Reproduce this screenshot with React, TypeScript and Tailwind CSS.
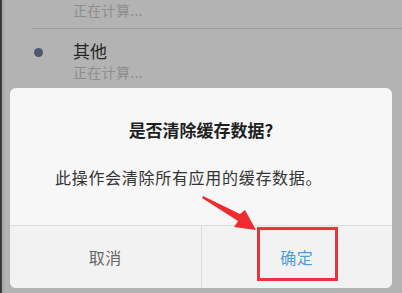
import React from "react";

export default function App() {
  const font = { fontFamily: '"Noto Sans CJK SC", "Noto Sans", sans-serif' };
  return (
    <div
      className="relative w-[402px] h-[293px] overflow-hidden bg-[#b3b3b3] flex"
      style={font}
    >
      <div className="w-[2px] h-full bg-[#3a3a3a]" />
      <div className="w-[3px] h-full bg-[#aaaaaa]" />
      <div className="flex-1 flex flex-col">
        <div className="h-[28px] pl-[68px] pt-[3px] flex items-start">
          <span className="text-[14px] leading-[15px] tracking-[0.3px] text-[#8e8e8e]">正在计算...</span>
        </div>
        <div className="ml-[27px] h-px bg-[#9e9e9e]" />
        <div className="flex pt-[10px]">
          <div className="w-[68px] flex justify-start pl-[29px] pt-[9px]">
            <div className="w-[9px] h-[9px] rounded-full bg-[#4d5870]" />
          </div>
          <div className="flex flex-col">
            <span className="text-[17px] leading-[24px] text-[#262626]">其他</span>
            <span className="text-[14px] leading-[20px] tracking-[0.3px] text-[#8e8e8e] mt-[-1px]">正在计算...</span>
          </div>
        </div>
      </div>

      {/* dialog */}
      <div className="absolute left-[10px] top-[88px] w-[382px] h-[200px] rounded-[6px] bg-[#f7f7f7] flex flex-col overflow-hidden">
        <div className="flex flex-col items-center pt-[30px]">
          <div className="text-[17px] leading-[24px] font-bold text-[#1f1f1f]">是否清除缓存数据?</div>
        </div>
        <div className="pl-[45px] mt-[23px] text-[16px] leading-[24px] tracking-[0.7px] text-[#333333]">
          此操作会清除所有应用的缓存数据。
        </div>
        <div className="mt-auto h-[63px] border-t border-[#dcdcdc] bg-[#f2f2f2] flex">
          <div className="flex-1 flex items-center justify-center text-[16px] tracking-[0.5px] text-[#666666]">取消</div>
          <div className="w-px bg-[#dcdcdc]" />
          <div className="flex-1 flex items-center justify-center text-[16px] tracking-[0.5px] text-[#4a9edb]">确定</div>
        </div>
      </div>

      {/* annotation: red box */}
      <div className="absolute left-[257px] top-[227px] w-[81px] h-[54px] border-[3px] border-[#e8353b]" />

      {/* annotation: arrow */}
      <svg
        className="absolute left-0 top-0"
        width="402"
        height="293"
        viewBox="0 0 402 293"
      >
        <polygon
          points="203,196 240,214 245,210 256,230 234,227 238,221 202,198"
          fill="#ee2b2f"
        />
      </svg>
    </div>
  );
}
